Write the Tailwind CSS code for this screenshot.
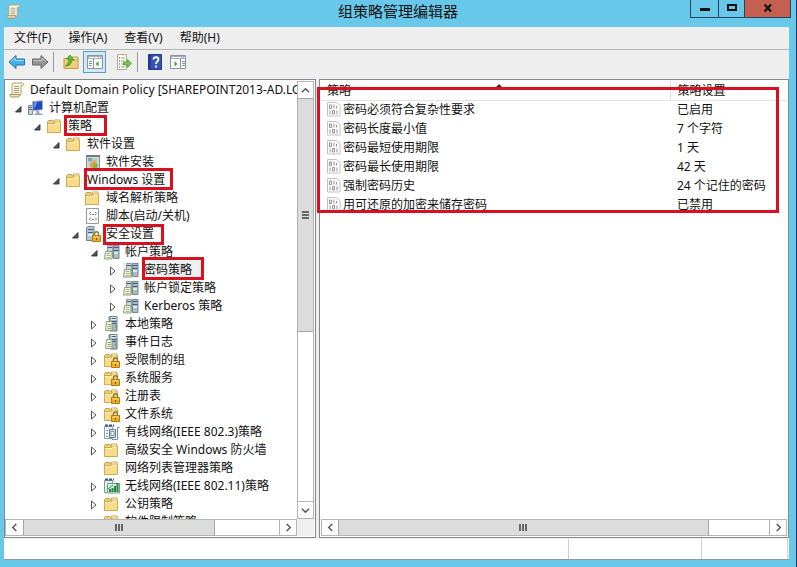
<!DOCTYPE html>
<html lang="zh-CN">
<head>
<meta charset="utf-8">
<title>组策略管理编辑器</title>
<script src="https://cdn.jsdelivr.net/npm/@tailwindcss/browser@4"></script>
</head>
<body class="bg-[#68c8e9] font-['Noto_Sans','Noto_Sans_CJK_SC',sans-serif] text-[12px] leading-[18px] text-[#111]">

<svg class="hidden" aria-hidden="true">
  <symbol id="scroll" viewBox="0 0 16 16">
    <path d="M4 1h9.5c1.5 0 1.500 2.500 0 2.500H12V13H3V3z" fill="#fbf6df" stroke="#b3a173"/>
    <path d="M1 12.500h9.500c0 2-.5 2.500-1.500 2.500H2.500C1 15 .7 13.500 1 12.500z" fill="#f5e8b8" stroke="#9f8d60"/>
    <path d="M5 4.500h5M5 6.500h5M5 8.500h5M5 10.500h5" stroke="#a59d86"/>
  </symbol>
  <symbol id="folder" viewBox="1 0 16 16">
    <path d="M1.500 3.500l1-1h4l1 1.500h1V2h5.500v12.500h-12.500z" fill="#f2cf73" stroke="#c9a04a"/>
    <path d="M9 2.500h4.500v3H9z" fill="#fff4c9"/>
    <path d="M1.500 5.500h7l1-1.500h5V14.500h-13z" fill="#f9dc8b" stroke="#d2aa52"/>
    <path d="M2.500 6.500h6.500l1-1.500h3.500" fill="none" stroke="#fff3c4"/>
  </symbol>
  <symbol id="padlock" viewBox="0 0 16 16">
    <path d="M9.500 10V8c0-3 4-3 4 0v2" fill="none" stroke="#8f7a3c" stroke-width="1.500"/>
    <path d="M7.500 9.500h8v6h-8z" fill="#e9ad28" stroke="#b17c10"/>
    <path d="M8.500 11h6" stroke="#ffdf7c"/><path d="M11 12h1v2h-1z" fill="#6b4a05"/>
  </symbol>
  <symbol id="folderlock" viewBox="0 0 16 16"><use href="#folder"/><use href="#padlock"/></symbol>
  <symbol id="tower" viewBox="0 0 16 16">
    <path d="M5 1l2-.6h6V15H6z" fill="#a7b8bf" stroke="#66787f"/>
    <path d="M7 1h5.500v3H7z" fill="#e5eef2"/><path d="M7.500 2.500h4.500M7.500 5.500h4.500M7.500 7.500h4.500" stroke="#3f5b86"/>
    <path d="M11 9.500h1v2h-1z" fill="#55ac4c"/>
  </symbol>
  <symbol id="serverdoc" viewBox="0 0 16 16">
    <use href="#tower"/>
    <path d="M2.500 5.500h5.500v9H1.500z" fill="#f2f5d8" stroke="#8d9f7c"/>
    <path d="M3.500 8.500h3.500M3.500 10.500h3.500M3.500 12.500h3.500" stroke="#94a684"/>
  </symbol>
  <symbol id="servers" viewBox="0 0 16 16">
    <path d="M3.500 1.500h5v12h-5z" fill="#c8d6da" stroke="#8a9ba1"/>
    <path d="M9.500 1.500h5.500v13H9.500z" fill="#aabdc3" stroke="#778b92"/>
    <path d="M4 3.500h4M10 3.500h4.500M10 6.500h4.500" stroke="#35588c"/>
    <path d="M10 8h4v2h-4z" fill="#dae7ea"/>
    <path d="M1.500 7.500h6.500v7.500H.5z" fill="#f2f5d8" stroke="#8d9f7c"/>
    <path d="M2.500 9.500h4M2.500 11.500h4M2.500 13.500h4" stroke="#a5b596"/>
  </symbol>
  <symbol id="serverlock" viewBox="0 0 16 16">
    <path d="M1.500 1.500l2-1H9v14H1.500z" fill="#b5c6cf" stroke="#6d828e"/>
    <path d="M3 3.500h5M3 6.500h5" stroke="#3d6590"/><path d="M3 8h4v2H3z" fill="#e7f0f3"/>
    <use href="#padlock"/>
  </symbol>
  <symbol id="computer" viewBox="0 0 16 16">
    <path d="M.5 5.500h4v9h-4z" fill="#c9d2d8" stroke="#7b8891"/><path d="M1 7.500h3M1 9.500h3" stroke="#536981"/>
    <path d="M4.500 1.500l10-.8v9l-10 1z" fill="#2347b8" stroke="#a3b1c7"/>
    <path d="M5.500 2.500l4-.4L6 9.500h-.5z" fill="#6d94ea"/>
    <path d="M8 11l3-.3.5 2.300 3 1v1H6v-1l2.500-.8z" fill="#9ba9b6"/>
  </symbol>
  <symbol id="software" viewBox="0 0 16 16">
    <path d="M1.500 1.500h13v13h-13z" fill="#d3d8d5" stroke="#858e8e"/>
    <path d="M1 1h14v2H1z" fill="#6f7b80"/><path d="M3.500 4.500h9v8h-9z" fill="#b6cad2"/>
    <path d="M5 13c0-4 2-6 5-7l1 3-3 5z" fill="#e3a23b"/><path d="M9 9l4 1-1 4H8z" fill="#7cb354"/>
    <path d="M3 4h4v3H3z" fill="#7aa6bb"/>
  </symbol>
  <symbol id="script" viewBox="0 0 16 16">
    <path d="M1.500.5h12v15h-12z" fill="#fff" stroke="#9a9a9a"/>
    <path d="M6 4L4.500 5.500 6 7M10 4l1.500 1.500L10 7M6 9.500L4.500 11 6 12.500M10 9.500l1.500 1.500-1.500 1.500M7 6.500h2M7 11.500h2" fill="none" stroke="#777"/>
  </symbol>
  <symbol id="wired" viewBox="0 0 16 16">
    <path d="M.5 2.500h8v12h-8z" fill="#eef2f5" stroke="#93a0a8"/>
    <path d="M1 1.500h9" stroke="#35588c" stroke-width="2" stroke-dasharray="3 1"/>
    <path d="M2 6.500h2M2 9.500h2M2 12.500h2" stroke="#8b9aa3"/>
    <path d="M5.500 5.500h6v8h-6z" fill="#d2e0e9" stroke="#5d7c95"/><path d="M7 7.500h3v4H7z" fill="#fff" stroke="#7394ab"/>
    <path d="M13.500 14V3.500h2M8 15.500h5.500V12" fill="none" stroke="#7c8d99"/>
  </symbol>
  <symbol id="wireless" viewBox="0 0 16 16">
    <path d="M.5 2.500h8v12h-8z" fill="#e2efe9" stroke="#7f9c91"/>
    <path d="M1 1.500h9" stroke="#35588c" stroke-width="2" stroke-dasharray="3 1"/>
    <path d="M3.500 5.500h12v9.500h-12z" fill="#d8efdf" stroke="#70a184"/>
    <path d="M6 14v-3M8.500 14V10M11 14V8M13.500 14V5" stroke="#23833f" stroke-width="2"/>
    <path d="M4 11l5-4" stroke="#2f8f76"/>
  </symbol>
  <symbol id="policy" viewBox="0 0 15 15">
    <path d="M.5.500h9l3.500 3v10.500H.500z" fill="#fff" stroke="#c2c2c2"/>
    <path d="M2.500 3h2v3.500h-2zM7 2.500v4M9.500 4v2.500M3 8.500v4M5.500 8.500h2v3.500h-2zM10 8.500v4" fill="none" stroke="#92929a"/>
  </symbol>
  <symbol id="open" viewBox="0 0 8 8"><path d="M7 1.500v5.500H1.500z" fill="#555" stroke="#222" stroke-width=".8"/></symbol>
  <symbol id="shut" viewBox="0 0 8 10"><path d="M1.500 1l4.500 4-4.500 4z" fill="#fff" stroke="#555"/></symbol>
  <symbol id="chev" viewBox="0 0 10 10"><path d="M7 1L3 5l4 4" fill="none" stroke="#555" stroke-width="1.600"/></symbol>
</svg>

<div class="flex h-screen flex-col border-r border-[#0d3c66] bg-[#68c8e9]">
  <header class="relative flex h-[27px] shrink-0 justify-between pl-[6px] pr-[5px]">
    <svg class="mt-[4px] size-[15px]"><use href="#scroll"/></svg>
    <h1 class="absolute inset-x-0 top-0 text-center text-[15px] leading-[22px]">组策略管理编辑器</h1>
    <div class="relative flex h-[18px] border border-t-0 border-[#23455c]">
      <button aria-label="最小化" class="flex w-[28px] items-center justify-center border-r border-[#23455c]"><svg class="size-[12px]" viewBox="0 0 12 12"><path d="M1 5h10v3H1z" fill="#111"/></svg></button>
      <button aria-label="最大化" class="flex w-[26px] items-center justify-center border-r border-[#23455c]"><svg class="h-[12px] w-[12px]" viewBox="0 0 12 12"><path d="M2 2h8v5H2z" fill="none" stroke="#111" stroke-width="2"/></svg></button>
      <button aria-label="关闭" class="flex w-[45px] items-center justify-center bg-[#c55f50]"><svg class="h-[12px] w-[10px]" viewBox="0 0 10 12"><path d="M1.500 1.500l6.500 7M8 1.500L1.500 8.500" stroke="#111" stroke-width="2.200"/></svg></button>
    </div>
  </header>

  <main class="mr-[7px] ml-[4px] flex min-h-0 flex-1 flex-col bg-[#eeeeef]">
    <nav class="flex h-[23px] shrink-0 items-center gap-[17px] border-b border-[#b5b5b5] pl-[10px]">
      <button>文件(F)</button><button>操作(A)</button><button>查看(V)</button><button>帮助(H)</button>
    </nav>

    <div class="flex h-[29px] shrink-0 items-center pb-[5px] pl-[4px]" role="toolbar">
      <button aria-label="后退"><svg class="h-[16px] w-[18px]" viewBox="0 0 18 16"><path d="M1 8l7-6.500V5h8.500v6H8v3.500z" fill="#45b0ea" stroke="#2c6fa3"/><path d="M3 7.500L7 4v2.500h8.500" fill="none" stroke="#a8e0fb"/></svg></button>
      <button aria-label="前进" class="ml-[5px]"><svg class="h-[16px] w-[18px]" viewBox="0 0 18 16"><path d="M17 8l-7-6.500V5H1.500v6H10v3.500z" fill="#969696" stroke="#666"/><path d="M2.500 6.500H11V4l4 3.500" fill="none" stroke="#c6c6c6"/></svg></button>
      <span class="ml-[4px] h-[20px] border-l border-[#999]"></span>
      <button aria-label="上一级" class="ml-[9px]"><svg class="size-[16px]" viewBox="0 0 16 16"><path d="M1 4.500h5l1 1h8v9H1z" fill="#f3cd78" stroke="#c39a47"/><path d="M9 3h6v3H9z" fill="#f9e0a0" stroke="#c39a47"/><path d="M2.500 12c4 0 6-2 6-6H11L7 1 3.500 5H6c0 3-1 5-3.500 7z" fill="#59bd35" stroke="#2f8a22" stroke-width=".7"/></svg></button>
      <button aria-label="显示/隐藏控制台树" aria-pressed="true" class="ml-[4px] flex h-[22px] w-[23px] items-center justify-center border border-[#5b9bc9] bg-[#d3e7f5]"><svg class="h-[14px] w-[16px]" viewBox="0 0 16 14"><path d="M.5.500h15v13H.500z" fill="#fff" stroke="#8a959d"/><path d="M1 1h14v3H1z" fill="#a5b1ba"/><path d="M2 2.500h9M12 2.500h1M14 2.500h1" stroke="#fff"/><path d="M6.500 4v9" stroke="#8a959d"/><path d="M2 6.500h3M2 8.500h3M2 10.500h3" stroke="#7895b1"/><path d="M11.500 6v5.500L8.500 9z" fill="#46a53b"/></svg></button>
      <button aria-label="导出列表" class="ml-[10px]"><svg class="size-[16px]" viewBox="0 0 16 16"><path d="M1.500.500h9v15h-9z" fill="#fffdf0" stroke="#b3ad90"/><path d="M3 4h1M3 7h1M3 10h1M3 13h1" stroke="#444"/><path d="M5 4h4M5 7h4M5 10h3M5 13h4" stroke="#999"/><path d="M7.500 8h4V5.500L15.500 9.500l-4 4V11h-4z" fill="#72cc4a" stroke="#3f9a28" stroke-width=".7"/></svg></button>
      <span class="ml-[5px] h-[20px] border-l border-[#999]"></span>
      <button aria-label="帮助" class="ml-[10px]"><svg class="h-[16px] w-[14px]" viewBox="0 0 14 16"><path d="M.500.500h13v15H.500z" fill="#3453b4" stroke="#24398a"/><path d="M1 1h2v14H1z" fill="#243c92"/><path d="M5.500 5.500c0-3 5-3 5 0 0 2-2.500 2-2.500 4.500M8 11.500v2" fill="none" stroke="#fff" stroke-width="1.800"/></svg></button>
      <button aria-label="显示/隐藏操作窗格" class="ml-[8px]"><svg class="h-[14px] w-[16px]" viewBox="0 0 16 14"><path d="M.5.500h15v13H.500z" fill="#fff" stroke="#8a959d"/><path d="M1 1h14v3H1z" fill="#a5b1ba"/><path d="M2 2.500h9M12 2.500h1M14 2.500h1" stroke="#fff"/><path d="M10.500 4v9" stroke="#8a959d"/><path d="M12 6.500h3M12 8.500h3M12 10.500h3" stroke="#7895b1"/><path d="M4.500 6v5.500L7.500 9z" fill="#46a53b"/></svg></button>
    </div>

    <div class="flex min-h-0 flex-1 gap-[3px]">
      <section class="flex w-[312px] shrink-0 flex-col border border-[#828790] bg-white p-px pl-0" aria-label="控制台树">
        <div class="flex min-h-0 flex-1">
          <div class="min-w-0 flex-1 overflow-hidden whitespace-nowrap">
            <div class="flex h-[18px] items-center gap-[5px] pl-[4px]"><svg class="size-[16px] shrink-0"><use href="#scroll"/></svg><span>Default Domain Policy [SHAREPOINT2013-AD.LO</span></div>
            <ul class="pl-[9px]">
              <li>
                <div class="flex h-[18px] items-center"><svg class="mt-[2px] mr-[6px] size-[8px]"><use href="#open"/></svg><svg class="mr-[5px] size-[16px]"><use href="#computer"/></svg>计算机配置</div>
                <ul class="pl-[19px]">
                  <li>
                    <div class="flex h-[18px] items-center"><svg class="mt-[2px] mr-[6px] size-[8px]"><use href="#open"/></svg><svg class="mr-[5px] size-[16px]"><use href="#folder"/></svg><span class="relative">策略<i class="absolute -top-[2px] -right-[15px] -bottom-[1px] -left-[4px] border-3 border-[#d9101f]"></i></span></div>
                    <ul class="pl-[19px]">
                      <li>
                        <div class="flex h-[18px] items-center"><svg class="mt-[2px] mr-[6px] size-[8px]"><use href="#open"/></svg><svg class="mr-[5px] size-[16px]"><use href="#folder"/></svg>软件设置</div>
                        <ul class="pl-[19px]">
                          <li class="flex h-[18px] items-center pl-[14px]"><svg class="mr-[5px] size-[16px]"><use href="#software"/></svg>软件安装</li>
                        </ul>
                      </li>
                      <li>
                        <div class="flex h-[18px] items-center"><svg class="mt-[2px] mr-[6px] size-[8px]"><use href="#open"/></svg><svg class="mr-[5px] size-[16px]"><use href="#folder"/></svg><span class="relative">Windows 设置<i class="absolute -top-[3px] -right-[8px] -bottom-px -left-[3px] border-3 border-[#d9101f]"></i></span></div>
                        <ul class="pl-[19px]">
                          <li class="flex h-[18px] items-center pl-[14px]"><svg class="mr-[5px] size-[16px]"><use href="#folder"/></svg>域名解析策略</li>
                          <li class="flex h-[18px] items-center pl-[14px]"><svg class="mr-[5px] size-[16px]"><use href="#script"/></svg>脚本(启动/关机)</li>
                          <li>
                            <div class="flex h-[18px] items-center"><svg class="mt-[2px] mr-[6px] size-[8px]"><use href="#open"/></svg><svg class="mr-[5px] size-[16px]"><use href="#serverlock"/></svg><span class="relative">安全设置<i class="absolute -top-px -right-[10px] -bottom-[2px] -left-[3px] border-3 border-[#d9101f]"></i></span></div>
                            <ul class="pl-[19px]">
                              <li>
                                <div class="flex h-[18px] items-center"><svg class="mt-[2px] mr-[6px] size-[8px]"><use href="#open"/></svg><svg class="mr-[5px] size-[16px]"><use href="#servers"/></svg>帐户策略</div>
                                <ul class="pl-[19px]">
                                  <li class="flex h-[18px] items-center"><svg class="mt-[2px] mr-[6px] h-[10px] w-[8px]"><use href="#shut"/></svg><svg class="mr-[5px] size-[16px] bg-[#efefef]"><use href="#servers"/></svg><span class="relative bg-[#efefef] pr-[10px]">密码策略<i class="absolute -top-[4px] -right-[2px] -bottom-px -left-[2px] border-3 border-[#d9101f]"></i></span></li>
                                  <li class="flex h-[18px] items-center"><svg class="mt-[2px] mr-[6px] h-[10px] w-[8px]"><use href="#shut"/></svg><svg class="mr-[5px] size-[16px]"><use href="#servers"/></svg>帐户锁定策略</li>
                                  <li class="flex h-[18px] items-center"><svg class="mt-[2px] mr-[6px] h-[10px] w-[8px]"><use href="#shut"/></svg><svg class="mr-[5px] size-[16px]"><use href="#servers"/></svg>Kerberos 策略</li>
                                </ul>
                              </li>
                              <li class="flex h-[18px] items-center"><svg class="mt-[2px] mr-[6px] h-[10px] w-[8px]"><use href="#shut"/></svg><svg class="mr-[5px] size-[16px]"><use href="#serverdoc"/></svg>本地策略</li>
                              <li class="flex h-[18px] items-center"><svg class="mt-[2px] mr-[6px] h-[10px] w-[8px]"><use href="#shut"/></svg><svg class="mr-[5px] size-[16px]"><use href="#serverdoc"/></svg>事件日志</li>
                              <li class="flex h-[18px] items-center"><svg class="mt-[2px] mr-[6px] h-[10px] w-[8px]"><use href="#shut"/></svg><svg class="mr-[5px] size-[16px]"><use href="#folderlock"/></svg>受限制的组</li>
                              <li class="flex h-[18px] items-center"><svg class="mt-[2px] mr-[6px] h-[10px] w-[8px]"><use href="#shut"/></svg><svg class="mr-[5px] size-[16px]"><use href="#folderlock"/></svg>系统服务</li>
                              <li class="flex h-[18px] items-center"><svg class="mt-[2px] mr-[6px] h-[10px] w-[8px]"><use href="#shut"/></svg><svg class="mr-[5px] size-[16px]"><use href="#folderlock"/></svg>注册表</li>
                              <li class="flex h-[18px] items-center"><svg class="mt-[2px] mr-[6px] h-[10px] w-[8px]"><use href="#shut"/></svg><svg class="mr-[5px] size-[16px]"><use href="#folderlock"/></svg>文件系统</li>
                              <li class="flex h-[18px] items-center"><svg class="mt-[2px] mr-[6px] h-[10px] w-[8px]"><use href="#shut"/></svg><svg class="mr-[5px] size-[16px]"><use href="#wired"/></svg>有线网络(IEEE 802.3)策略</li>
                              <li class="flex h-[18px] items-center"><svg class="mt-[2px] mr-[6px] h-[10px] w-[8px]"><use href="#shut"/></svg><svg class="mr-[5px] size-[16px]"><use href="#folder"/></svg>高级安全 Windows 防火墙</li>
                              <li class="flex h-[18px] items-center pl-[14px]"><svg class="mr-[5px] size-[16px]"><use href="#folder"/></svg>网络列表管理器策略</li>
                              <li class="flex h-[18px] items-center"><svg class="mt-[2px] mr-[6px] h-[10px] w-[8px]"><use href="#shut"/></svg><svg class="mr-[5px] size-[16px]"><use href="#wireless"/></svg>无线网络(IEEE 802.11)策略</li>
                              <li class="flex h-[18px] items-center"><svg class="mt-[2px] mr-[6px] h-[10px] w-[8px]"><use href="#shut"/></svg><svg class="mr-[5px] size-[16px]"><use href="#folder"/></svg>公钥策略</li>
                              <li class="flex h-[18px] items-center pl-[14px]"><svg class="mr-[5px] size-[16px]"><use href="#folder"/></svg>软件限制策略</li>
                            </ul>
                          </li>
                        </ul>
                      </li>
                    </ul>
                  </li>
                </ul>
              </li>
            </ul>
          </div>
          <div class="flex w-[17px] flex-col border border-[#b4b4b4]">
            <button aria-label="向上滚动" class="flex h-[16px] items-center justify-center"><svg class="size-[9px] rotate-90"><use href="#chev"/></svg></button>
            <div class="min-h-0 flex-1"><div class="flex h-[58%] flex-col items-center justify-center gap-px border-y border-[#a6a6a6] bg-[#dcdcdc]"><i class="h-[2px] w-[7px] bg-[#666]"></i><i class="h-[2px] w-[7px] bg-[#666]"></i><i class="h-[2px] w-[7px] bg-[#666]"></i></div></div>
            <button aria-label="向下滚动" class="flex h-[17px] items-center justify-center border-t border-[#b4b4b4]"><svg class="size-[9px] -rotate-90"><use href="#chev"/></svg></button>
          </div>
        </div>
        <div class="flex h-[17px] shrink-0 bg-[#efefef] pr-[17px]">
          <div class="flex flex-1 border border-[#b4b4b4] bg-white">
            <button aria-label="向左滚动" class="flex w-[17px] items-center justify-center"><svg class="size-[9px]"><use href="#chev"/></svg></button>
            <div class="flex-1"><div class="flex h-full w-3/4 items-center justify-center gap-px border-x border-[#a6a6a6] bg-[#dcdcdc]"><i class="h-[7px] w-[2px] bg-[#666]"></i><i class="h-[7px] w-[2px] bg-[#666]"></i><i class="h-[7px] w-[2px] bg-[#666]"></i></div></div>
            <button aria-label="向右滚动" class="flex w-[17px] items-center justify-center border-l border-[#b4b4b4]"><svg class="size-[9px] rotate-180"><use href="#chev"/></svg></button>
          </div>
        </div>
      </section>

      <section class="relative flex min-w-0 flex-1 flex-col border border-[#828790] bg-white p-px" aria-label="策略列表">
        <div class="min-h-0 flex-1">
          <table class="w-full table-fixed text-left">
            <thead>
              <tr class="h-[19px] border-b border-[#e2e2e2]">
                <th class="relative border-r border-[#dedede] p-0 pt-px pl-[6px] leading-[17px] font-normal">策略<svg class="absolute top-[2px] left-1/2 h-[5px] w-[8px]" viewBox="0 0 8 5"><path d="M0 5l4-4 4 4z" fill="#333"/></svg></th>
                <th class="w-[117px] p-0 pt-px pl-[7px] leading-[17px] font-normal">策略设置</th>
              </tr>
            </thead>
            <tbody>
              <tr class="h-[19px]"><td class="p-0 pl-[6px]"><div class="flex items-center"><svg class="mr-px size-[15px]"><use href="#policy"/></svg>密码必须符合复杂性要求</div></td><td class="p-0 pl-[7px]">已启用</td></tr>
              <tr class="h-[19px]"><td class="p-0 pl-[6px]"><div class="flex items-center"><svg class="mr-px size-[15px]"><use href="#policy"/></svg>密码长度最小值</div></td><td class="p-0 pl-[7px]">7 个字符</td></tr>
              <tr class="h-[19px]"><td class="p-0 pl-[6px]"><div class="flex items-center"><svg class="mr-px size-[15px]"><use href="#policy"/></svg>密码最短使用期限</div></td><td class="p-0 pl-[7px]">1 天</td></tr>
              <tr class="h-[19px]"><td class="p-0 pl-[6px]"><div class="flex items-center"><svg class="mr-px size-[15px]"><use href="#policy"/></svg>密码最长使用期限</div></td><td class="p-0 pl-[7px]">42 天</td></tr>
              <tr class="h-[19px]"><td class="p-0 pl-[6px]"><div class="flex items-center"><svg class="mr-px size-[15px]"><use href="#policy"/></svg>强制密码历史</div></td><td class="p-0 pl-[7px]">24 个记住的密码</td></tr>
              <tr class="h-[19px]"><td class="p-0 pl-[6px]"><div class="flex items-center"><svg class="mr-px size-[15px]"><use href="#policy"/></svg>用可还原的加密来储存密码</div></td><td class="p-0 pl-[7px]">已禁用</td></tr>
            </tbody>
          </table>
        </div>
        <div class="flex h-[17px] shrink-0 border border-[#b4b4b4]">
          <button aria-label="向左滚动" class="flex w-[16px] items-center justify-center"><svg class="size-[9px]"><use href="#chev"/></svg></button>
          <div class="flex-1"><div class="flex h-full w-[86%] items-center justify-center gap-px border-x border-[#a6a6a6] bg-[#dcdcdc]"><i class="h-[7px] w-[2px] bg-[#666]"></i><i class="h-[7px] w-[2px] bg-[#666]"></i><i class="h-[7px] w-[2px] bg-[#666]"></i></div></div>
          <button aria-label="向右滚动" class="flex w-[17px] items-center justify-center border-l border-[#b4b4b4]"><svg class="size-[9px] rotate-180"><use href="#chev"/></svg></button>
        </div>
        <i class="absolute top-[7px] right-[9px] -left-[3px] h-[126px] border-3 border-[#d9101f]"></i>
      </section>
    </div>

    <footer class="mt-px flex h-[21px] shrink-0 border-b border-[#8f9aa0] bg-white pr-px">
      <div class="flex-1 border-r border-[#cfcfcf]"></div>
      <div class="w-[133px] border-r border-[#cfcfcf]"></div>
      <div class="w-[86px] border-r border-[#cfcfcf]"></div>
    </footer>
  </main>
  <div class="h-[7px] shrink-0"></div>
</div>
</body>
</html>
